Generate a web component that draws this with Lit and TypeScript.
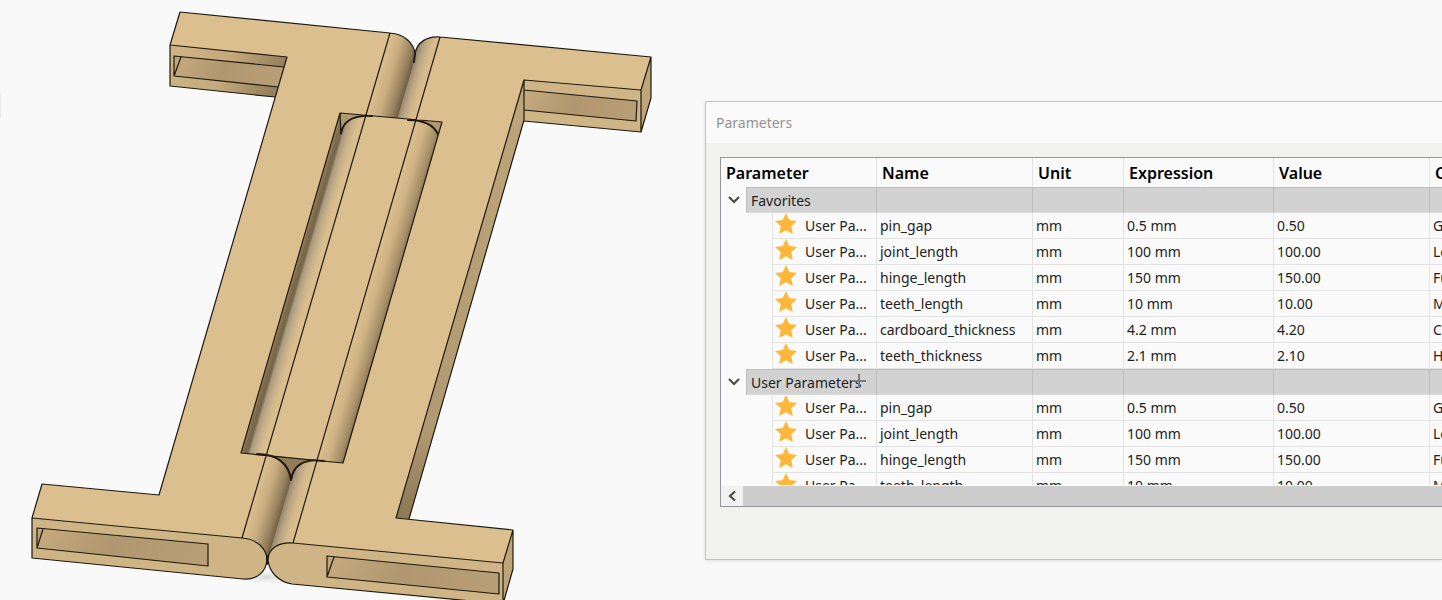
import { LitElement, html, css, svg } from "lit";
import { customElement, state } from "lit/decorators.js";

interface Row {
  name: string;
  unit: string;
  expression: string;
  value: string;
  comment: string;
}

const mm = (name: string, expr: string, value: string, comment: string): Row => ({
  name,
  unit: "mm",
  expression: `${expr} mm`,
  value,
  comment,
});

const ROWS: Row[] = [
  mm("pin_gap", "0.5", "0.50", "G"),
  mm("joint_length", "100", "100.00", "Le"),
  mm("hinge_length", "150", "150.00", "Fu"),
  mm("teeth_length", "10", "10.00", "M"),
  mm("cardboard_thickness", "4.2", "4.20", "C"),
  mm("teeth_thickness", "2.1", "2.10", "H"),
];

// Shears a horizontal gradient so its bands run parallel to the hinge axis.
const SHEAR = "matrix(1 0 -0.293 1 0 0)";

@customElement("hinge-model")
class HingeModel extends LitElement {
  static styles = css`
    :host {
      display: block;
    }
    .model {
      display: block;
      width: 100%;
      overflow: visible;
    }
    .edge {
      fill: none;
      stroke: #1d1910;
      stroke-width: 1.2;
      stroke-linejoin: round;
      stroke-linecap: round;
    }
    .heavy {
      stroke-width: 1.9;
    }
    .top {
      fill: #dcbf8e;
    }
    .front {
      fill: #cfb485;
    }
    .side {
      fill: #bea57a;
    }
    .corner {
      fill: #b09b71;
    }
    .seam {
      fill: #84725a;
    }
  `;

  render() {
    return html`<svg class="model" viewBox="0 0 705 600" role="img" aria-label="Hinge model">
      ${svg`
      <defs>
        <linearGradient id="rollL" gradientUnits="userSpaceOnUse" x1="400" x2="432" y1="0" y2="0" gradientTransform=${SHEAR}>
          <stop offset="0" stop-color="#dcbf8e"/><stop offset=".4" stop-color="#c9ad80"/>
          <stop offset=".8" stop-color="#96805d"/><stop offset="1" stop-color="#6d5d44"/>
        </linearGradient>
        <linearGradient id="rollR" gradientUnits="userSpaceOnUse" x1="430" x2="451" y1="0" y2="0" gradientTransform=${SHEAR}>
          <stop offset="0" stop-color="#8d7c62"/><stop offset=".35" stop-color="#b9a584"/>
          <stop offset=".7" stop-color="#d4b98b"/><stop offset="1" stop-color="#dcbf8e"/>
        </linearGradient>
        <linearGradient id="pinL" gradientUnits="userSpaceOnUse" x1="373" x2="400" y1="0" y2="0" gradientTransform=${SHEAR}>
          <stop offset="0" stop-color="#a08962"/><stop offset=".14" stop-color="#7d6a4a"/>
          <stop offset=".27" stop-color="#77664a"/><stop offset=".36" stop-color="#a99a80"/>
          <stop offset=".55" stop-color="#c4ae88"/><stop offset=".8" stop-color="#d9bd8d"/>
          <stop offset="1" stop-color="#dcbf8e"/>
        </linearGradient>
        <linearGradient id="pinR" gradientUnits="userSpaceOnUse" x1="451" x2="479" y1="0" y2="0" gradientTransform=${SHEAR}>
          <stop offset="0" stop-color="#dcbf8e"/><stop offset=".4" stop-color="#cfb384"/>
          <stop offset=".8" stop-color="#a8906a"/><stop offset="1" stop-color="#8b7655"/>
        </linearGradient>
        <linearGradient id="slot" x1="0" x2="1" y1="0" y2=".15">
          <stop offset="0" stop-color="#c6ab7e"/><stop offset=".5" stop-color="#b1976f"/>
          <stop offset="1" stop-color="#b89e75"/>
        </linearGradient>
        <linearGradient id="under" x1="0" x2="1" y1="0" y2=".2">
          <stop offset="0" stop-color="#cfb485"/><stop offset=".55" stop-color="#c4a97c"/>
          <stop offset="1" stop-color="#967f5b"/>
        </linearGradient>
        <linearGradient id="wall" x1="0" x2="0" y1="0" y2="1">
          <stop offset="0" stop-color="#bea57a"/><stop offset=".8" stop-color="#b19971"/>
          <stop offset="1" stop-color="#8c7756"/>
        </linearGradient>
        <radialGradient id="shade">
          <stop offset="0" stop-color="#d6d6d8"/><stop offset="1" stop-color="#f9f9f9" stop-opacity="0"/>
        </radialGradient>
      </defs>
      <rect x="0" y="93" width="1" height="25" fill="#ececec"/>
      <ellipse cx="267" cy="577" rx="34" ry="9" fill="url(#shade)"/>

      <path class="seam" d="M411 62L417 62L270 562L264 562Z"/>
      <path class="top" d="M180 12L390 33L242 538L32 518L42 484L159 495L287 57L170 45Z"/>
      <path class="top" d="M440 37L651 57L641 90L524 80L396 518L513 530L503 563L293 543Z"/>
      <path fill="url(#rollL)" d="M390 33C403 34 413 42 415 54L414 62L267 562C266 549 256 539 242 538Z"/>
      <path fill="url(#rollR)" d="M440 37C425 36 416 43 415 54L414 62L267 562C268 549 278 542 293 543Z"/>

      <path fill="url(#under)" d="M170 45L287 57L275 97L170 86Z"/>
      <path fill="url(#slot)" d="M174 56L284 67L278 87L174 76Z"/>
      <path class="side" d="M174 56L181 57L174 76Z"/>
      <path class="front" d="M524 80L641 90L641 132L524 121Z"/>
      <path fill="url(#slot)" d="M524 90L637 101L636 121L524 110Z"/>
      <path class="side" d="M641 90L651 57L651 98L641 132Z"/>
      <path fill="url(#wall)" d="M524 80V120L409 519L396 518Z"/>

      <path class="front" d="M32 518L242 538C257 539 267 549 267 560C266 572 257 580 243 579L32 558Z"/>
      <path class="front" d="M503 563L293 543C278 542 268 549 268 560C269 572 279 582 292 584L503 604Z"/>
      <path fill="url(#slot)" d="M37 528L208 544V566L37 548Z"/>
      <path class="side" d="M37 528L43 529L37 548Z"/>
      <path fill="url(#slot)" d="M327 556L499 573V594L327 577Z"/>
      <path class="side" d="M327 556L334 557L327 577Z"/>
      <path class="side" d="M503 563L513 530V569L503 604Z"/>

      <path class="top" d="M340 113L442 122L343 463L241 453Z"/>
      <path fill="url(#pinL)" d="M340 113L366 116L268 455L241 453Z"/>
      <path fill="url(#pinR)" d="M415 120L442 122L343 463L317 460Z"/>
      <path class="corner" d="M340 113L368 116C352 115 343 122 341 133Z"/>
      <path class="corner" d="M411 120L442 122L438 135C434 126 426 121 411 120Z"/>
      <path fill="#8f7d59" d="M268 455L317 460C302 459 293 466 291 478C289 465 281 456 268 455Z"/>

      <path class="edge" d="M180 12L390 33C404 34 414 43 415 54C417 42 427 36 440 37L651 57L641 90L524 80L396 518L513 530L503 563L293 543
        M242 538L32 518L42 484L159 495L287 57L170 45L180 12
        M170 45V86L275 97M284 67L174 56V76L278 87M181 57L174 76
        M641 90V132L524 121M651 57V98L641 132M524 90L637 101L636 121L524 110M524 80V120L409 519
        M32 518V558L243 579C257 580 266 572 267 560C267 549 257 539 242 538
        M293 543C278 542 268 549 268 560C269 572 279 582 292 584L503 604V563M513 530V569L503 604
        M37 528L208 544V566L37 548ZM43 529L37 548M327 556L499 573V594L327 577ZM334 557L327 577
        M390 33L242 538M440 37L293 543
        M340 113L442 122L343 463L241 453ZM340 113L341 134"/>
      <path class="edge heavy" d="M341 133C343 122 352 115 372 116M408 120C425 120 434 126 438 134
        M257 454C276 454 289 463 291 480C293 466 303 458 324 461M415 54L414 62M267 556V564"/>`}
    </svg>`;
  }
}

@customElement("parameters-dialog")
class ParametersDialog extends LitElement {
  static styles = css`
    :host {
      display: block;
    }
    .dialog {
      position: relative;
      border: 1px solid #c3c3c3;
      border-right: 0;
      background: #f1f2f0;
      box-shadow: 0 1px 3px #0000001c;
      padding-bottom: 52px;
      overflow: hidden;
    }
    .title {
      margin: 0;
      padding: 0 10px;
      background: #fafafa;
      color: #929292;
      font-size: 14px;
      font-weight: 400;
      line-height: 41px;
    }
    .frame {
      margin: 14px 0 0 14px;
      border: 1px solid #95969b;
      border-right: 0;
      background: #fafafa;
    }
    .viewport {
      height: 327px;
      margin-bottom: 1px;
      overflow: hidden;
    }
    .grid {
      width: 870px;
      border-collapse: separate;
      border-spacing: 0;
      table-layout: fixed;
      font-size: 14px;
      line-height: 20px;
      color: #222;
    }
    .c-type,
    .c-name,
    .c-value {
      width: 156px;
    }
    .c-unit {
      width: 91px;
    }
    .c-expr {
      width: 150px;
    }
    th,
    td {
      box-sizing: border-box;
      height: 26px;
      padding: 1px 3px 0;
      border-right: 1px solid #e2e4e4;
      border-bottom: 1px solid #e2e4e4;
      text-align: left;
      white-space: nowrap;
    }
    th {
      height: 29px;
      padding: 0 5px;
      border-bottom: 0;
      font-size: 16px;
      font-weight: 600;
      color: #000;
    }
    .group td {
      background: #d2d2d3;
      border-color: #bdbdbd;
      border-bottom-color: #dcdcdc;
      border-top: 1px solid #bdbdbd;
    }
    .group .lead,
    .item .lead {
      padding: 0;
      border-bottom: 0;
      border-top: 0;
      background: none;
    }
    .tree {
      display: flex;
      height: 26px;
    }
    .toggle,
    .arrow {
      display: grid;
      place-items: center;
      padding: 0;
      border: 0;
      background: none;
    }
    .toggle {
      width: 25px;
      height: 25px;
    }
    .label {
      box-sizing: border-box;
      flex: 1;
      display: flex;
      align-items: center;
      padding-top: 1px;
      border-bottom: 1px solid #e2e4e4;
    }
    .group .label {
      padding-left: 4px;
      background: #d2d2d3;
      border: 1px solid #bdbdbd;
      border-right: 0;
      border-bottom-color: #dcdcdc;
    }
    .item .label {
      margin-left: 51px;
      padding-left: 2px;
      gap: 8px;
      border-left: 1px solid #e2e4e4;
    }
    .star {
      display: block;
      width: 22px;
      height: 22px;
      margin-bottom: 4px;
      fill: #fdb73b;
    }
    .stroke {
      display: block;
      fill: none;
      stroke: #4c4c4c;
      stroke-width: 2.2;
    }
    .scrollbar {
      display: flex;
      height: 20px;
      background: #f1f1f1;
    }
    .arrow {
      width: 22px;
    }
    .thumb {
      flex: 1;
      background: #cdcdcd;
    }
    .pointer {
      position: absolute;
      left: 146px;
      top: 272px;
      stroke: #7c7c7c;
      stroke-width: 2;
    }
  `;

  @state() private closed: Record<string, boolean> = {};

  private flip(title: string) {
    this.closed = { ...this.closed, [title]: !this.closed[title] };
  }

  private row(r: Row) {
    return html`<tr class="item">
      <td class="lead">
        <div class="tree">
          <div class="label">
            <svg class="star" viewBox="0 0 22 22" aria-hidden="true">
              <path d="M11 0L14.3 7L22 8L16.300 13.200L17.800 21L11 17.200L4.200 21L5.700 13.200L0 8L7.700 7Z" />
            </svg>
            <span>User Pa...</span>
          </div>
        </div>
      </td>
      <td>${r.name}</td>
      <td>${r.unit}</td>
      <td>${r.expression}</td>
      <td>${r.value}</td>
      <td>${r.comment}</td>
    </tr>`;
  }

  private group(title: string) {
    return html`<tr class="group">
        <td class="lead">
          <div class="tree">
            <button class="toggle" aria-label=${title} @click=${() => this.flip(title)}>
              <svg class="stroke" width="12" height="10" viewBox="0 0 12 10"><path d="M1 2L6 7L11 2" /></svg>
            </button>
            <div class="label">${title}</div>
          </div>
        </td>
        <td></td>
        <td></td>
        <td></td>
        <td></td>
        <td></td>
      </tr>
      ${this.closed[title] ? "" : ROWS.map((r) => this.row(r))}`;
  }

  render() {
    return html`<section class="dialog" aria-label="Parameters">
      <h1 class="title">Parameters</h1>
      <div class="frame">
        <div class="viewport">
          <table class="grid">
            <colgroup>
              <col class="c-type" />
              <col class="c-name" />
              <col class="c-unit" />
              <col class="c-expr" />
              <col class="c-value" />
              <col />
            </colgroup>
            <thead>
              <tr>
                <th>Parameter</th>
                <th>Name</th>
                <th>Unit</th>
                <th>Expression</th>
                <th>Value</th>
                <th>Comments</th>
              </tr>
            </thead>
            <tbody>
              ${this.group("Favorites")} ${this.group("User Parameters")}
            </tbody>
          </table>
        </div>
        <div class="scrollbar">
          <button class="arrow" aria-label="Scroll left">
            <svg class="stroke" width="10" height="12" viewBox="0 0 10 12"><path d="M8 1.500L3 6L8 10.500" /></svg>
          </button>
          <div class="thumb"></div>
        </div>
      </div>
      <svg class="pointer" width="14" height="14" viewBox="0 0 14 14" aria-hidden="true"><path d="M7 0V14M0 7H14" /></svg>
    </section>`;
  }
}

@customElement("app-root")
class AppRoot extends LitElement {
  static styles = css`
    :host {
      display: grid;
      grid-template-columns: minmax(0, 705fr) minmax(0, 737fr);
      align-items: start;
      height: 100vh;
      overflow: hidden;
      background: #f9f9f9;
      font-family: "Noto Sans", "Open Sans", sans-serif;
    }
    .panel {
      margin-top: 101px;
    }
  `;

  render() {
    return html`<hinge-model></hinge-model><parameters-dialog class="panel"></parameters-dialog>`;
  }
}
